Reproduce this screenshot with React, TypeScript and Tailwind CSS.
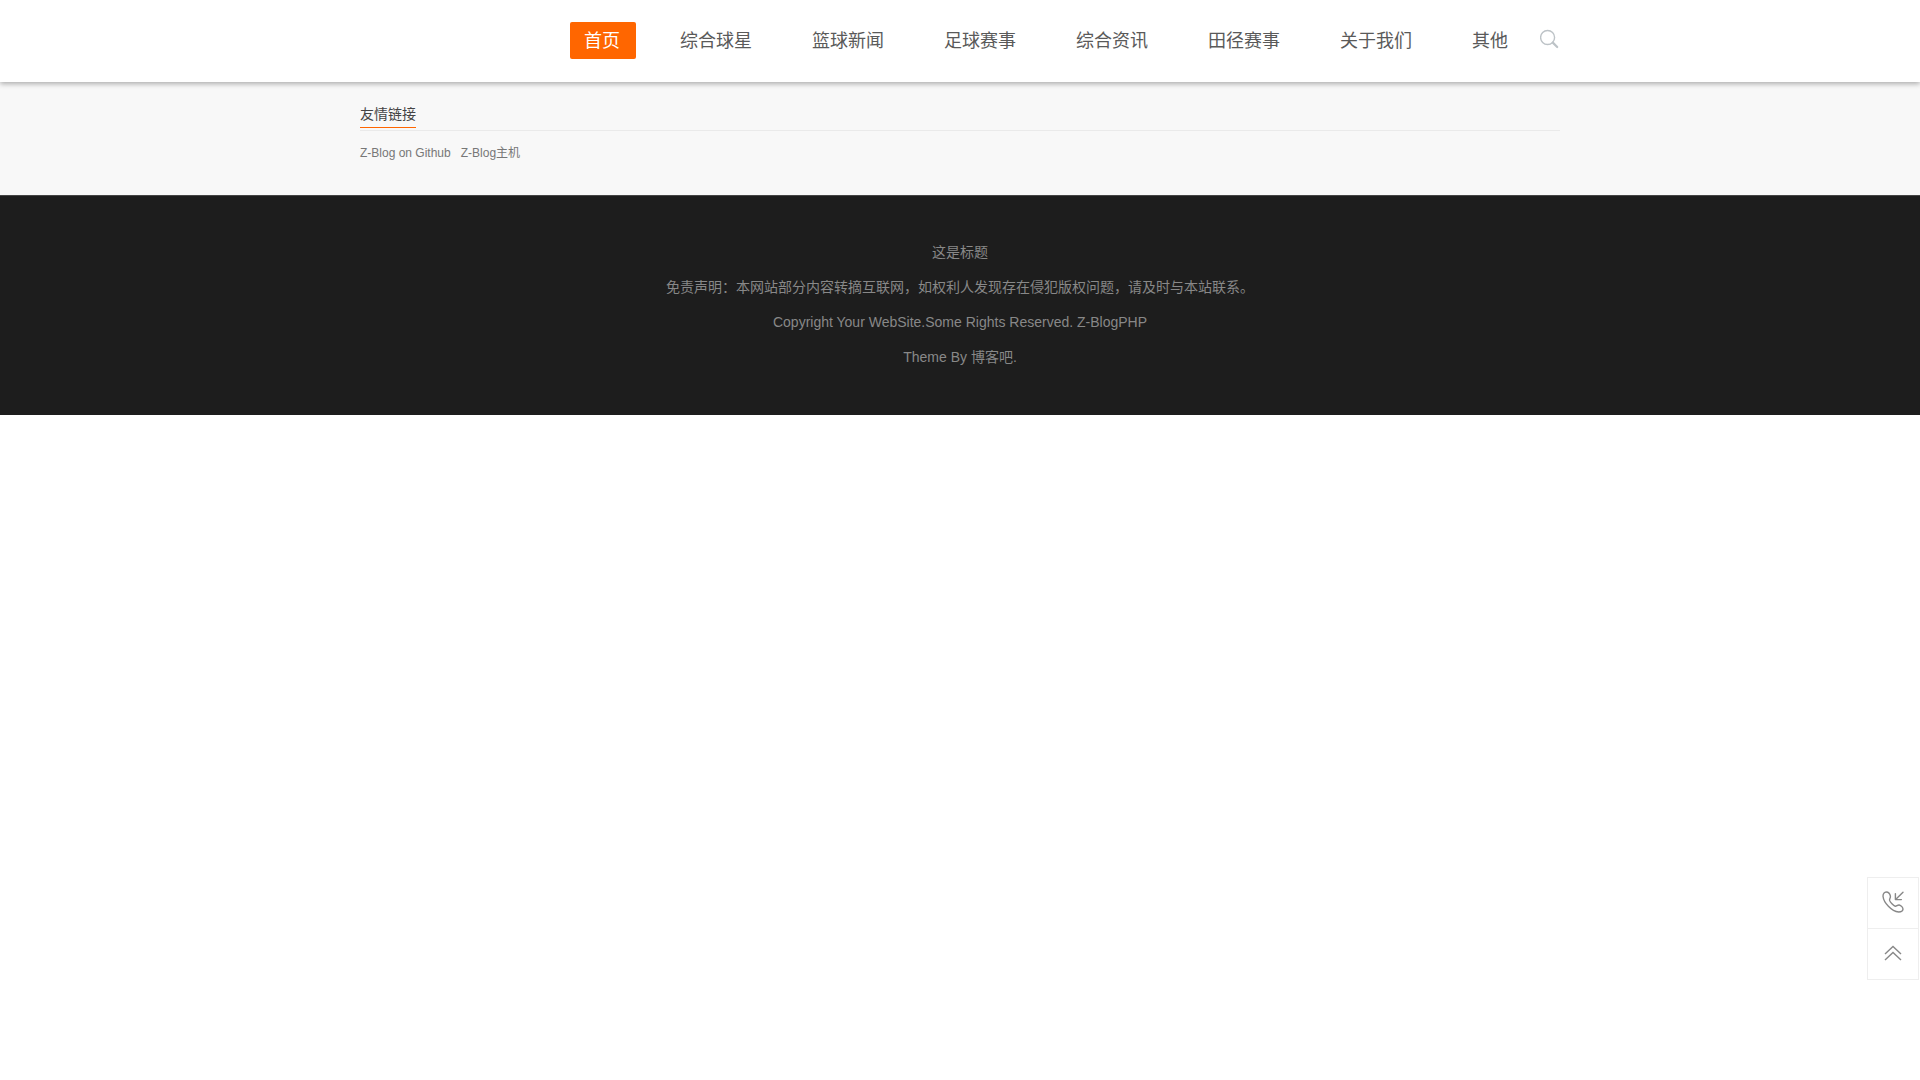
import React from "react";

const navItems = ["首页", "综合球星", "篮球新闻", "足球赛事", "综合资讯", "田径赛事", "关于我们", "其他"];

const footerLines = [
  "这是标题",
  "免责声明：本网站部分内容转摘互联网，如权利人发现存在侵犯版权问题，请及时与本站联系。",
];

function SearchIcon() {
  return (
    <svg width="20" height="20" viewBox="0 0 20 20" fill="none" stroke="#bdc3c7" aria-hidden="true">
      <circle cx="7.6" cy="8.5" r="7" strokeWidth="1.4" />
      <path d="M12.8 13.6 L17.2 18" strokeWidth="2.2" strokeLinecap="round" />
    </svg>
  );
}

function PhoneIcon() {
  return (
    <svg width="22" height="22" viewBox="0 0 22 22" fill="none" stroke="#888" strokeWidth="1.4" strokeLinecap="round" strokeLinejoin="round" aria-hidden="true">
      <path d="M4.2 1 C2.4 1 1 3 1 5.2 C1.4 9 3.6 12.4 6.4 15.2 C9.4 18.4 13 20.6 16.8 21 C19 21 20.8 19.8 21 18.2 C21 16.6 19.2 14.4 17.2 14 C15.4 13.8 14.6 15.4 13.2 15.2 C11.4 14.8 8.2 11.2 7.6 9.4 C7.2 8 8.6 7.2 8.4 5.2 C8 3 6.4 1 4.2 1 Z" />
      <path d="M21 1.2 L13.6 8.4 M13.4 2.6 V8.6 H19.4" />
    </svg>
  );
}

function TopIcon() {
  return (
    <svg width="18" height="16" viewBox="0 0 18 16" fill="none" stroke="#888" strokeWidth="1.4" aria-hidden="true">
      <path d="M1 9 L9 1.4 L17 9" />
      <path d="M1 15 L9 7.4 L17 15" />
    </svg>
  );
}

export default function App() {
  return (
    <div className="font-['Liberation_Sans','Noto_Sans_CJK_SC',sans-serif] text-sm text-[#888]">
      <header className="relative bg-white shadow-[0_2px_5px_rgba(0,0,0,0.3)]">
        <div className="mx-auto flex h-[82px] max-w-[1200px] items-start justify-end pt-[22px]">
          <nav className="flex gap-[30px] text-lg">
            {navItems.map((item, i) => (
              <a
                key={item}
                href="#"
                className={
                  i === 0
                    ? "h-[37px] rounded-xs bg-[#ff6600] pr-4 pl-[14px] leading-[38px] text-white"
                    : "h-[37px] rounded-xs pr-4 pl-[14px] leading-[38px] text-[#5a5a5a]"
                }
              >
                {item}
              </a>
            ))}
          </nav>
          <button type="button" aria-label="搜索" className="mt-[7px] ml-4">
            <SearchIcon />
          </button>
        </div>
      </header>

      <section className="bg-[#f8f8f8] pt-5">
        <div className="mx-auto h-[93px] max-w-[1200px]">
          <div className="flex h-[29px] border-b border-[#eaeaea]">
            <h2 className="h-[26px] border-b border-[#ff6600] leading-[24px] text-[#444]">友情链接</h2>
          </div>
          <ul className="mt-3 flex gap-[10px] text-xs leading-5 text-[#777]">
            <li><a href="#">Z-Blog on Github</a></li>
            <li><a href="#">Z-Blog主机</a></li>
          </ul>
        </div>
      </section>

      <footer className="border-t border-[#444] bg-[#1d1d1d] pt-[39px] pb-10 text-center leading-[35px]">
        {footerLines.map((line) => (
          <p key={line}>{line}</p>
        ))}
        <p>
          Copyright Your WebSite.Some Rights Reserved. <a href="#">Z-BlogPHP</a>
        </p>
        <p>
          Theme By <a href="#">博客吧</a>.
        </p>
      </footer>

      <aside className="fixed right-px bottom-[100px] flex w-[52px] flex-col divide-y divide-[#eee] border border-[#eee] bg-white">
        <button type="button" aria-label="电话" className="flex h-[51px] items-center justify-center pb-0.5">
          <PhoneIcon />
        </button>
        <button type="button" aria-label="返回顶部" className="flex h-[50px] items-center justify-center pb-0.5">
          <TopIcon />
        </button>
      </aside>
    </div>
  );
}
